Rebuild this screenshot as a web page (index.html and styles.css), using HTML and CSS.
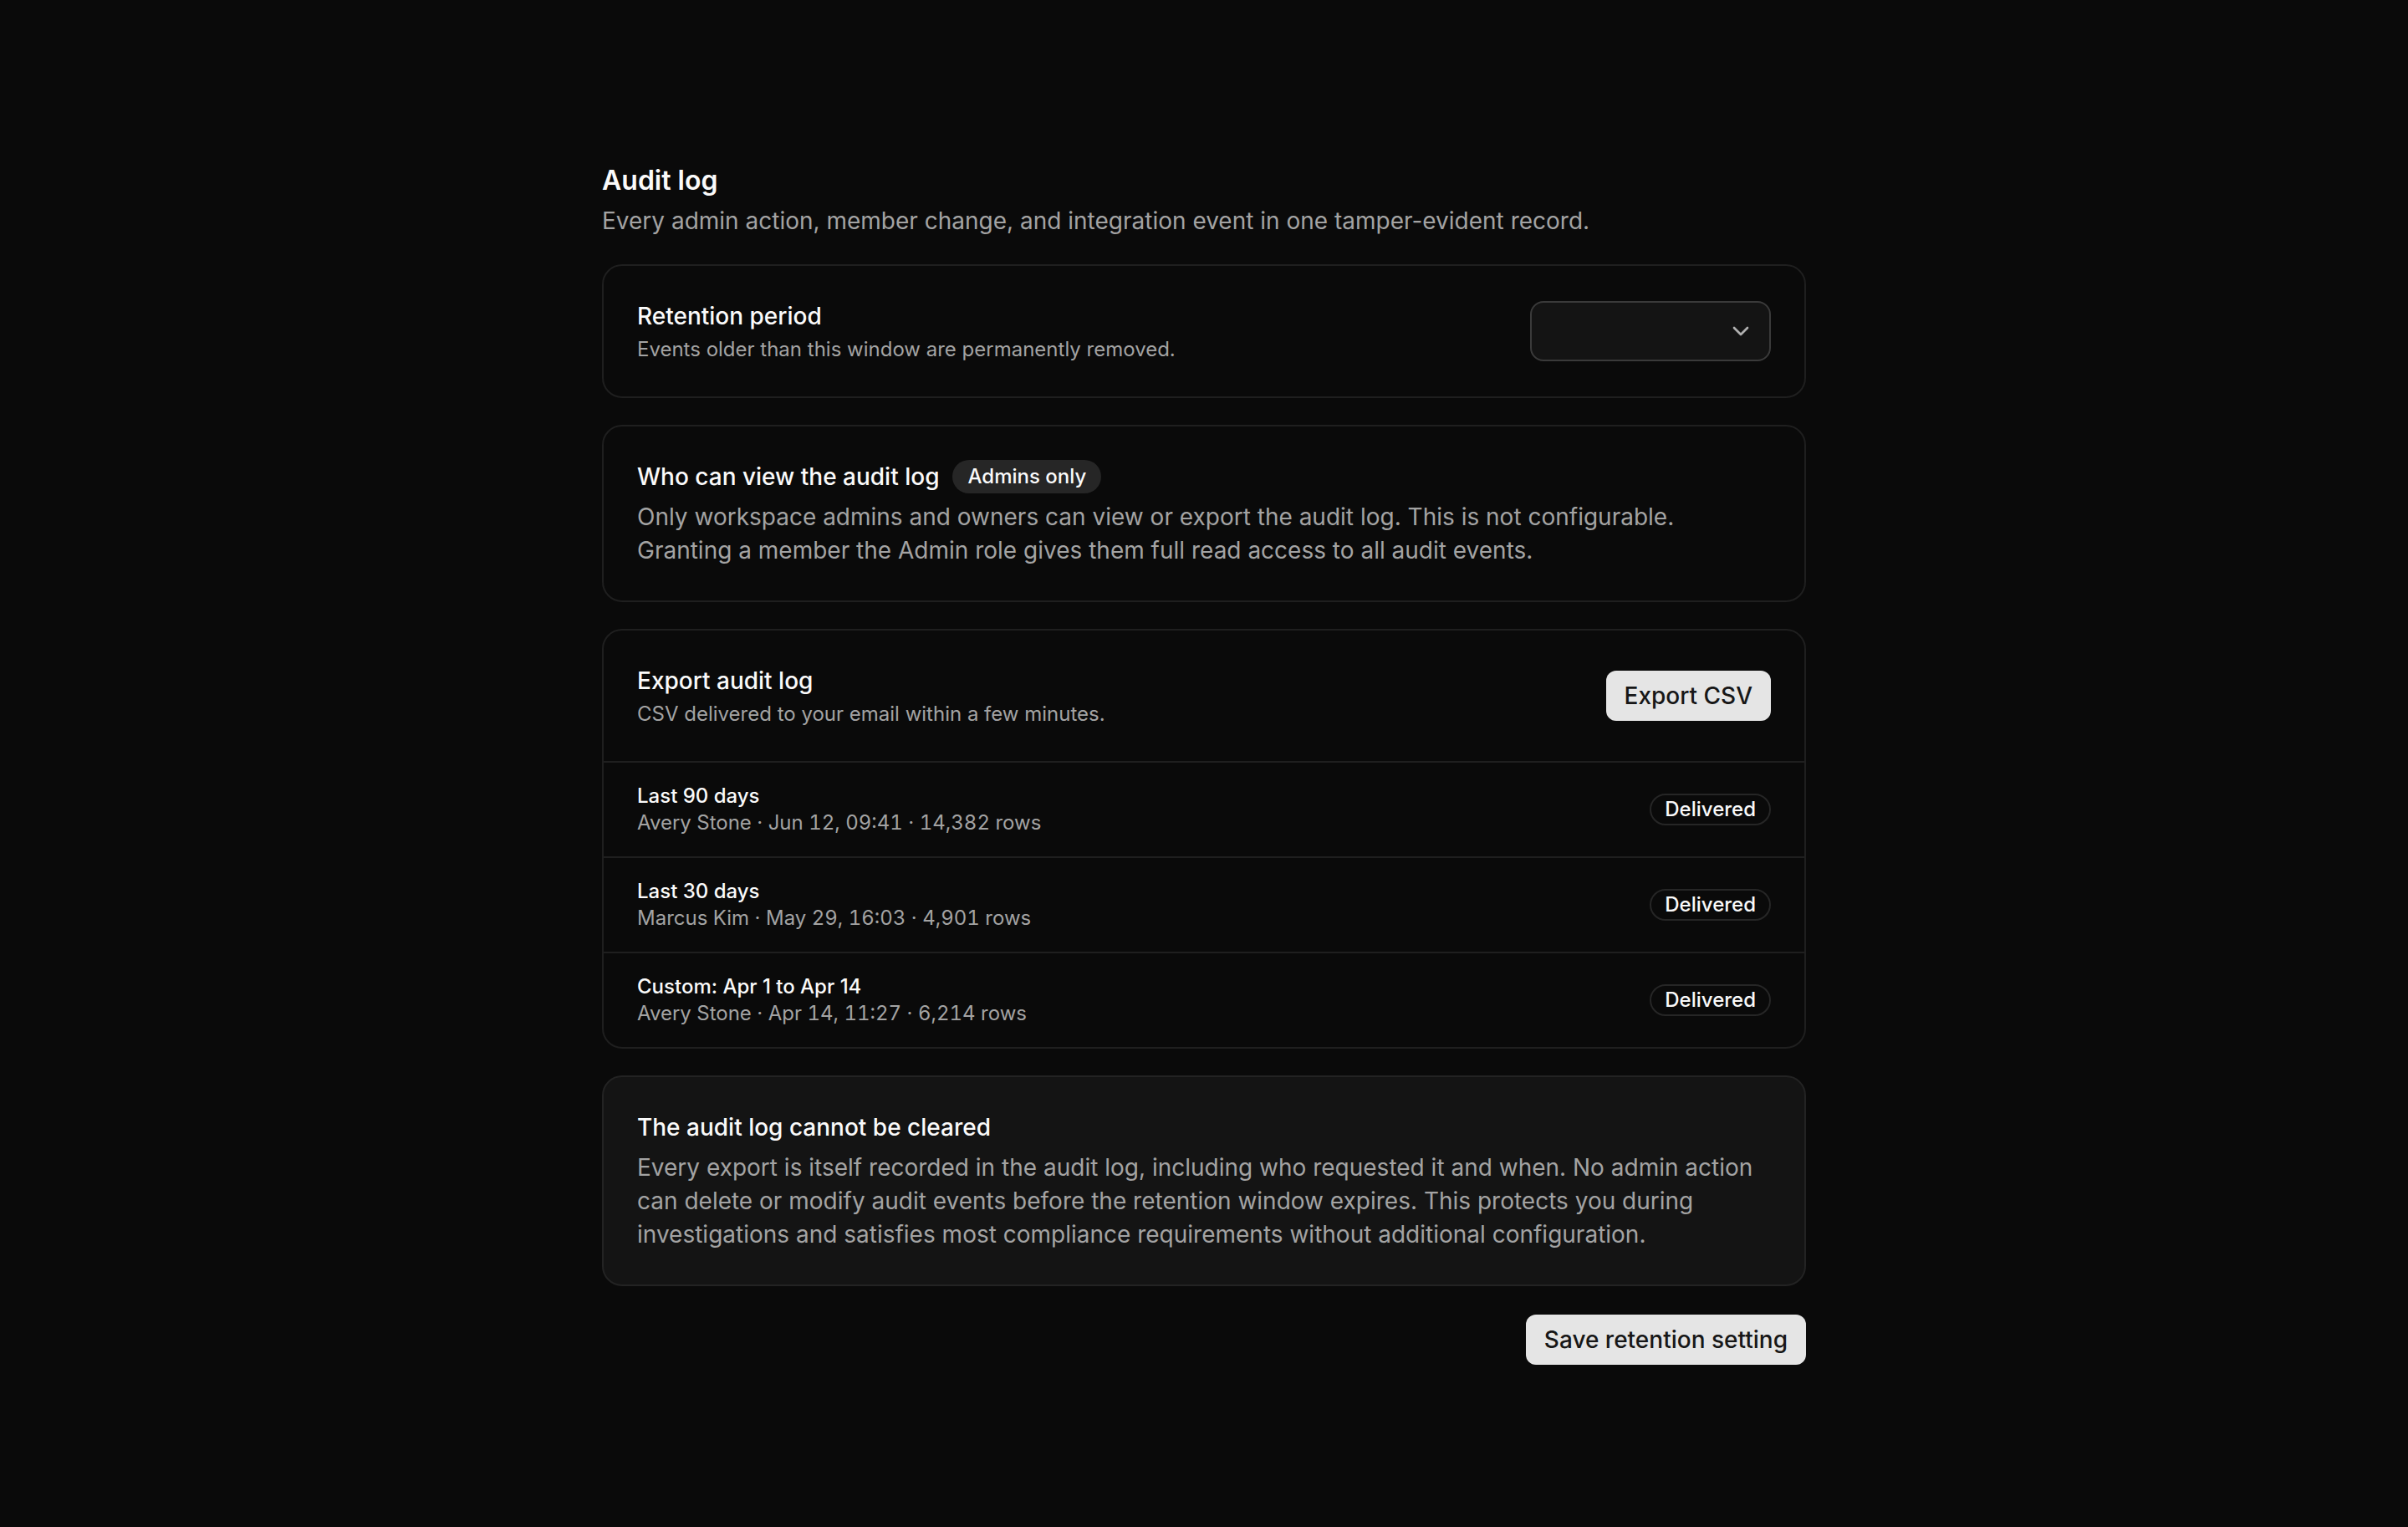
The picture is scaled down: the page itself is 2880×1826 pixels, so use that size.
FILE: index.html
```html
<!DOCTYPE html>
<html lang="en">
<head>
    <meta charset="UTF-8">
    <meta name="viewport" content="width=device-width, initial-scale=1.0">
    <title>Audit log</title>
    <link rel="stylesheet" href="styles.css">
</head>
<body>
    <div class="page">
        <div class="page-header">
            <h1 class="page-title">Audit log</h1>
            <p class="page-desc">Every admin action, member change, and integration event in one tamper-evident record.</p>
        </div>

        <!-- Retention -->
        <div class="card">
            <div class="card-row">
                <div>
                    <h3 class="card-title">Retention period</h3>
                    <p class="card-sub">Events older than this window are permanently removed.</p>
                </div>
                <div class="select">
                    <svg class="chevron" viewBox="0 0 24 24" fill="none" stroke="currentColor" stroke-width="2" stroke-linecap="round" stroke-linejoin="round"><path d="m6 9 6 6 6-6"/></svg>
                </div>
            </div>
        </div>

        <!-- Access -->
        <div class="card">
            <div class="card-body">
                <div class="title-line">
                    <h3 class="card-title">Who can view the audit log</h3>
                    <span class="pill">Admins only</span>
                </div>
                <p class="card-text">Only workspace admins and owners can view or export the audit log. This is not configurable.<br>Granting a member the Admin role gives them full read access to all audit events.</p>
            </div>
        </div>

        <!-- Exports -->
        <div class="card card-flush">
            <div class="card-row">
                <div>
                    <h3 class="card-title">Export audit log</h3>
                    <p class="card-sub">CSV delivered to your email within a few minutes.</p>
                </div>
                <button class="btn">Export CSV</button>
            </div>
            <div class="export-row">
                <div>
                    <div class="export-name">Last 90 days</div>
                    <div class="export-meta">Avery Stone · Jun 12, 09:41 · 14,382 rows</div>
                </div>
                <span class="status">Delivered</span>
            </div>
            <div class="export-row">
                <div>
                    <div class="export-name">Last 30 days</div>
                    <div class="export-meta">Marcus Kim · May 29, 16:03 · 4,901 rows</div>
                </div>
                <span class="status">Delivered</span>
            </div>
            <div class="export-row">
                <div>
                    <div class="export-name">Custom: Apr 1 to Apr 14</div>
                    <div class="export-meta">Avery Stone · Apr 14, 11:27 · 6,214 rows</div>
                </div>
                <span class="status">Delivered</span>
            </div>
        </div>

        <!-- Notice -->
        <div class="card card-muted">
            <div class="card-body">
                <h3 class="card-title">The audit log cannot be cleared</h3>
                <p class="card-text">Every export is itself recorded in the audit log, including who requested it and when. No admin action can delete or modify audit events before the retention window expires. This protects you during investigations and satisfies most compliance requirements without additional configuration.</p>
            </div>
        </div>

        <div class="actions">
            <button class="btn">Save retention setting</button>
        </div>
    </div>
</body>
</html>
```

FILE: styles.css
```css
body {
    margin: 0;
    padding: 0;
    background-color: #0a0a0a;
    color: #fafafa;
    font-family: Inter, "Noto Sans", sans-serif;
}
h1, h3, p { margin: 0; }

.page {
    width: 1440px;
    margin: 0 auto;
    padding: 192px 0 96px;
    display: flex;
    flex-direction: column;
    gap: 32px;
}
.page-title {
    font-size: 32px;
    line-height: 48px;
    font-weight: 600;
}
.page-desc {
    margin-top: 4px;
    font-size: 28px;
    line-height: 40px;
    color: #a3a3a3;
}

.card {
    border: 2px solid #1f1f1f;
    border-radius: 24px;
    background-color: #0a0a0a;
    overflow: hidden;
}
.card-muted {
    background-color: #141414;
    border-color: #232323;
}
.card-row {
    display: flex;
    align-items: center;
    justify-content: space-between;
    padding: 40px;
}
.card-body { padding: 40px; }
.card-title {
    font-size: 28px;
    line-height: 40px;
    font-weight: 500;
}
.card-sub {
    margin-top: 4px;
    font-size: 24px;
    line-height: 32px;
    color: #a3a3a3;
}
.card-text {
    margin-top: 8px;
    font-size: 28px;
    line-height: 40px;
    color: #a3a3a3;
}
.title-line {
    display: flex;
    align-items: center;
    gap: 16px;
}
.pill {
    display: inline-block;
    padding: 0 18px;
    height: 40px;
    line-height: 40px;
    border-radius: 999px;
    background-color: #262626;
    font-size: 24px;
    font-weight: 500;
}

.select {
    width: 288px;
    height: 72px;
    box-sizing: border-box;
    border: 2px solid #3a3a3a;
    border-radius: 16px;
    background-color: #141414;
    display: flex;
    align-items: center;
    justify-content: flex-end;
    padding-right: 18px;
}
.chevron { width: 32px; height: 32px; color: #b0b0b0; }

.btn {
    height: 60px;
    padding: 0 22px;
    border: none;
    border-radius: 12px;
    background-color: #e5e5e5;
    color: #171717;
    font-family: inherit;
    font-size: 28px;
    font-weight: 500;
    cursor: pointer;
}

.export-row {
    display: flex;
    align-items: center;
    justify-content: space-between;
    padding: 24px 40px;
    border-top: 2px solid #1f1f1f;
}
.export-name {
    font-size: 24px;
    line-height: 32px;
    font-weight: 500;
}
.export-meta {
    font-size: 24px;
    line-height: 32px;
    color: #a3a3a3;
    font-variant-numeric: tabular-nums;
}
.status {
    height: 38px;
    box-sizing: border-box;
    line-height: 34px;
    padding: 0 16px;
    border: 2px solid #262626;
    border-radius: 999px;
    font-size: 24px;
    font-weight: 500;
}

.actions {
    display: flex;
    justify-content: flex-end;
    margin-top: 2px;
}
```
